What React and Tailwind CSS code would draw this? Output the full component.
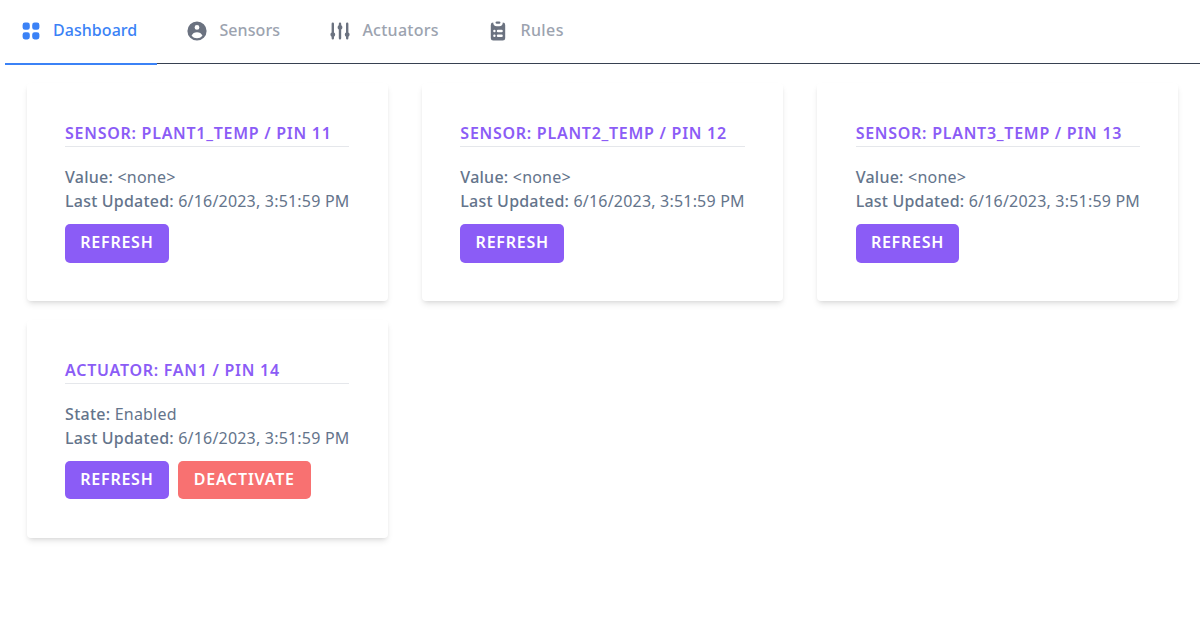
import { HiViewGrid, HiUserCircle, HiAdjustments, HiClipboardList } from "react-icons/hi";

const tabs = [
  { label: "Dashboard", Icon: HiViewGrid, text: "w-[84px] tracking-[0.05px]", active: true },
  { label: "Sensors", Icon: HiUserCircle, text: "w-[61px] tracking-[0.1px]" },
  { label: "Actuators", Icon: HiAdjustments, text: "w-[76px] tracking-[0.25px]" },
  { label: "Rules", Icon: HiClipboardList, text: "w-[44px] tracking-[0.4px]" },
];

const cards = [
  { title: "Sensor: plant1_temp / Pin 11", label: "Value:", value: "<none>" },
  { title: "Sensor: plant2_temp / Pin 12", label: "Value:", value: "<none>" },
  { title: "Sensor: plant3_temp / Pin 13", label: "Value:", value: "<none>" },
  { title: "Actuator: fan1 / Pin 14", label: "State:", value: "Enabled", canDeactivate: true },
];

function Tab({ label, Icon, text, active }) {
  return (
    <li
      className={
        active
          ? "-mb-px mr-[28.4px] flex h-[65px] w-[152px] border-b-2 border-[#3b82f6] pl-[14px] pt-[19px] text-[#3b82f6]"
          : "mr-[48px] flex pt-[19px] text-[#9ca3af]"
      }
    >
      <Icon className={active ? "size-6 shrink-0" : "size-6 shrink-0 text-[#6b7280]"} />
      <span className={`ml-[10px] whitespace-nowrap font-medium leading-[23px] ${text}`}>{label}</span>
    </li>
  );
}

function Button({ className, children }) {
  return (
    <button
      className={`rounded-[5px] pb-[3px] text-center font-semibold uppercase leading-6 text-white tracking-[0.75px] ${className}`}
    >
      {children}
    </button>
  );
}

function Card({ title, label, value, canDeactivate }) {
  return (
    <section className="h-[218px] rounded bg-white px-[38.4px] pt-[38px] shadow-md">
      <h2 className="h-[26px] whitespace-nowrap border-b border-[#e5e7eb] font-semibold uppercase leading-6 tracking-[0.73px] text-[#8b5cf6]">
        {title}
      </h2>
      <div className="mt-[18px] whitespace-nowrap leading-6 tracking-[0.2px] text-[#64748b]">
        <p>
          <span className="font-medium tracking-[0.25px]">{label}</span> {value}
        </p>
        <p>
          <span className="font-medium">Last Updated:</span> 6/16/2023, 3:51:59 PM
        </p>
      </div>
      <div className={canDeactivate ? "mt-[11px] flex h-[38px] gap-[9px]" : "mt-[11px] flex h-[39px]"}>
        <Button className="w-[103.7px] bg-[#8b5cf6]">Refresh</Button>
        {canDeactivate && <Button className="w-[133px] bg-[#f87171]">Deactivate</Button>}
      </div>
    </section>
  );
}

export default function App() {
  return (
    <div className="min-h-screen overflow-hidden bg-white font-['Noto_Sans',sans-serif] text-base">
      <nav className="pl-[5px]">
        <ul className="flex h-16 border-b border-[#374151]">
          {tabs.map((tab) => (
            <Tab key={tab.label} {...tab} />
          ))}
        </ul>
      </nav>
      <main className="grid grid-cols-[361.2px_361.2px_361.2px] gap-x-[34.1px] gap-y-[19px] pl-[26.7px] pt-[19px]">
        {cards.map((card) => (
          <Card key={card.title} {...card} />
        ))}
      </main>
    </div>
  );
}
